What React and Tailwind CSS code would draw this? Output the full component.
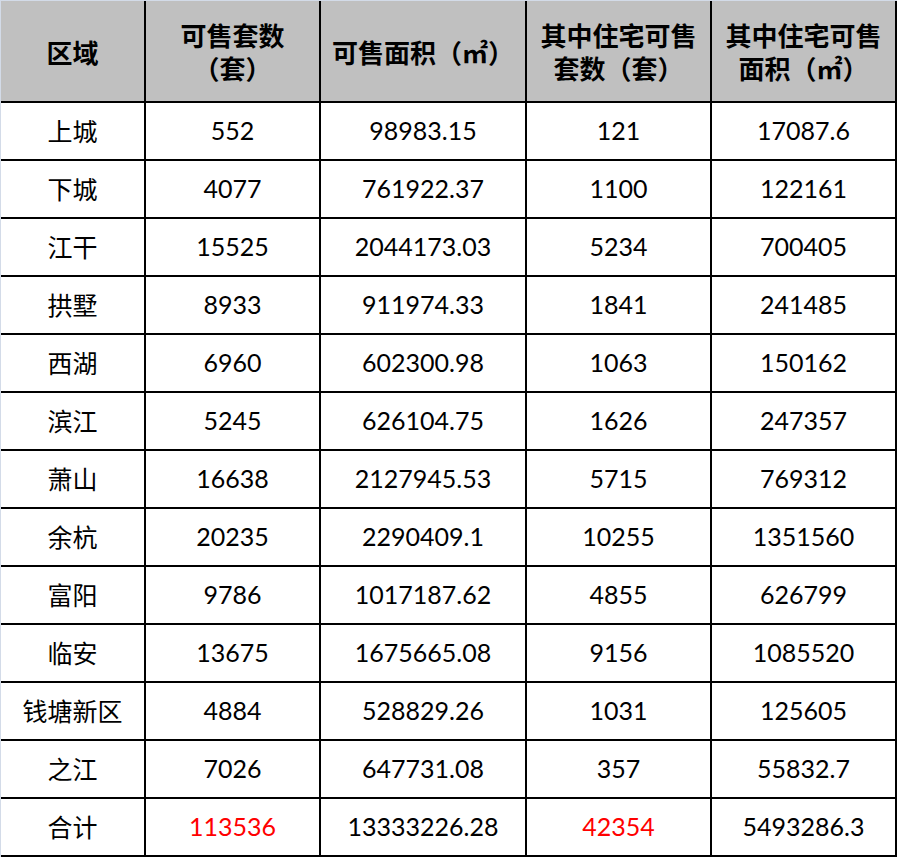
import React from "react";

const rows = [
  ["上城", "552", "98983.15", "121", "17087.6"],
  ["下城", "4077", "761922.37", "1100", "122161"],
  ["江干", "15525", "2044173.03", "5234", "700405"],
  ["拱墅", "8933", "911974.33", "1841", "241485"],
  ["西湖", "6960", "602300.98", "1063", "150162"],
  ["滨江", "5245", "626104.75", "1626", "247357"],
  ["萧山", "16638", "2127945.53", "5715", "769312"],
  ["余杭", "20235", "2290409.1", "10255", "1351560"],
  ["富阳", "9786", "1017187.62", "4855", "626799"],
  ["临安", "13675", "1675665.08", "9156", "1085520"],
  ["钱塘新区", "4884", "528829.26", "1031", "125605"],
  ["之江", "7026", "647731.08", "357", "55832.7"],
];

const cjk = { fontFamily: '"Noto Sans CJK SC", "Noto Sans", sans-serif' };
const num = { fontFamily: 'Lato, "Noto Sans CJK SC", sans-serif' };

function Head({ children }) {
  return (
    <div
      className="h-[102px] flex flex-col items-center justify-center border-r-2 border-b-2 border-black bg-[#c0c0c0] text-[26px] font-bold leading-[33px] text-black text-center"
      style={cjk}
    >
      {children}
    </div>
  );
}

function Cell({ children, red, isCjk }) {
  return (
    <div
      className={`h-[58px] flex items-center justify-center border-r-2 border-b-2 border-black bg-white text-[25px] ${
        red ? "text-[#ff0000]" : "text-black"
      }`}
      style={isCjk ? cjk : num}
    >
      {children}
    </div>
  );
}

export default function App() {
  return (
    <div className="w-[897px] h-[857px] bg-white">
      <div className="w-[897px] border-t border-l border-[#d3dbe8] grid grid-cols-[145px_175px_206px_185px_185px]">
        <Head>区域</Head>
        <Head>
          <span>可售套数</span>
          <span>（套）</span>
        </Head>
        <Head>
          <span>可售面积（㎡）</span>
        </Head>
        <Head>
          <span>其中住宅可售</span>
          <span>套数（套）</span>
        </Head>
        <Head>
          <span>其中住宅可售</span>
          <span>面积（㎡）</span>
        </Head>
        {rows.map((r) => (
          <React.Fragment key={r[0]}>
            <Cell isCjk>{r[0]}</Cell>
            <Cell>{r[1]}</Cell>
            <Cell>{r[2]}</Cell>
            <Cell>{r[3]}</Cell>
            <Cell>{r[4]}</Cell>
          </React.Fragment>
        ))}
        <Cell isCjk>合计</Cell>
        <Cell red>113536</Cell>
        <Cell>13333226.28</Cell>
        <Cell red>42354</Cell>
        <Cell>5493286.3</Cell>
      </div>
    </div>
  );
}
